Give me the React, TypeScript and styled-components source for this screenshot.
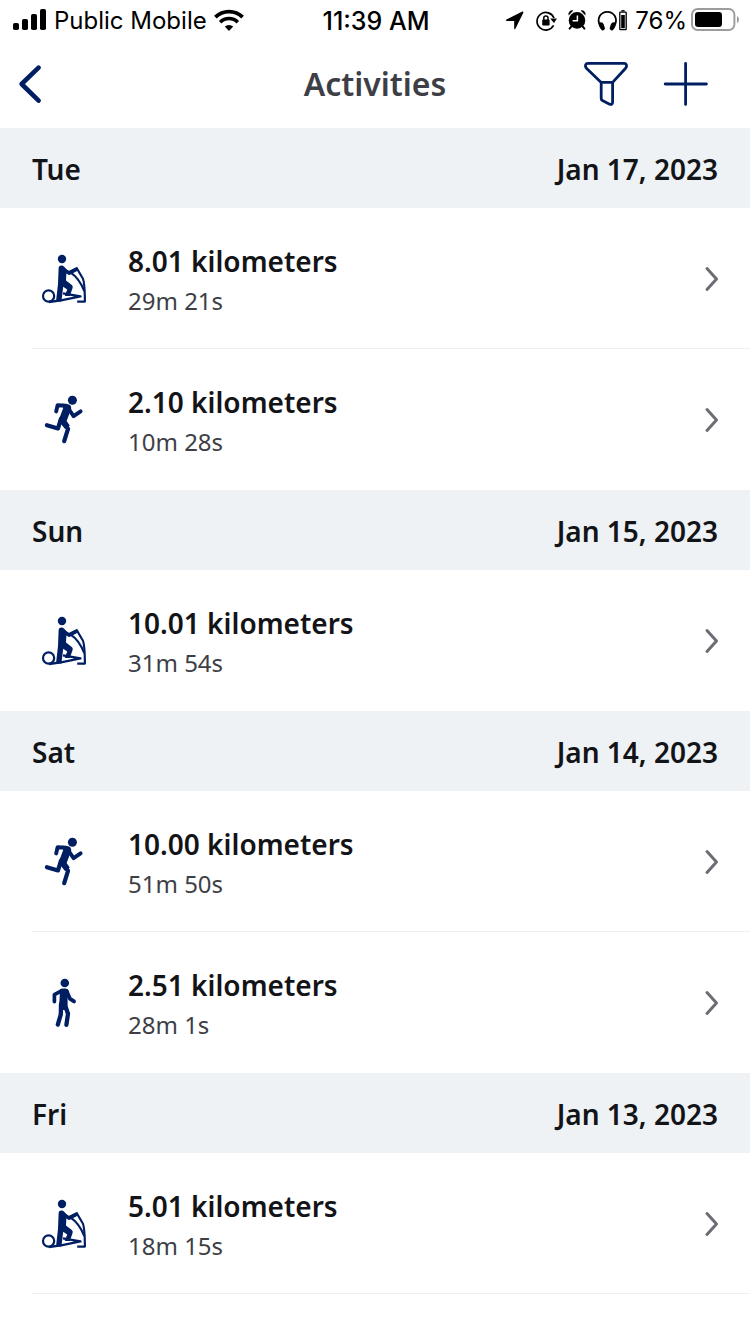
import React from "react";
import styled, { createGlobalStyle } from "styled-components";

const navy = "#001e62";

const GlobalStyle = createGlobalStyle`
  *, *::before, *::after { box-sizing: border-box; }
  body {
    margin: 0;
    background: #fff;
    color: #131417;
    font-family: "Noto Sans", "Open Sans", sans-serif;
  }
`;

const Screen = styled.div`
  width: 100%;
  padding-bottom: 40px;
`;

const StatusBar = styled.div`
  display: grid;
  grid-template-columns: 1fr auto 1fr;
  align-items: center;
  height: 40px;
  padding: 0 11px 0 13px;
  color: #000;
  font-family: Inter, "Liberation Sans", sans-serif;
  font-size: 24px;
  line-height: 32px;
  white-space: nowrap;
`;

const StatusGroup = styled.div<{ $end?: boolean }>`
  display: flex;
  align-items: center;
  justify-content: ${(p) => (p.$end ? "flex-end" : "flex-start")};
  gap: 7px;
`;

const StatusText = styled.span`
  padding-top: 2px;
`;

const Clock = styled.time`
  padding-top: 2px;
  font-size: 25px;
  font-weight: 500;
`;

const BatteryStatus = styled.div`
  display: flex;
  align-items: center;
  gap: 4px;
`;

const NavBar = styled.header`
  display: grid;
  grid-template-columns: 1fr auto 1fr;
  align-items: center;
  height: 88px;
  padding: 0 16px;
`;

const Title = styled.h1`
  margin: 0;
  color: #3e3f46;
  font-size: 32px;
  line-height: 44px;
  font-weight: 600;
`;

const Actions = styled.div`
  display: flex;
  justify-content: flex-end;
  gap: 32px;
  padding-right: 24px;
`;

const IconButton = styled.button`
  display: block;
  justify-self: start;
  padding: 0;
  border: 0;
  background: none;
  cursor: pointer;

  svg { display: block; }
`;

const DayHeader = styled.div`
  display: flex;
  align-items: center;
  justify-content: space-between;
  height: 80px;
  padding: 2px 32px 0;
  background: #eef2f5;
`;

const DayLabel = styled.h2`
  margin: 0;
  font-size: 28px;
  line-height: 40px;
  font-weight: 600;
`;

const DayDate = styled.time`
  font-size: 28px;
  line-height: 40px;
  font-weight: 600;
`;

const List = styled.ul`
  margin: 0;
  padding: 0 0 0 32px;
  list-style: none;
`;

const Item = styled.li<{ $divided: boolean }>`
  border-bottom: 1px solid ${(p) => (p.$divided ? "#eeeff1" : "transparent")};
`;

const ActivityLink = styled.a`
  display: flex;
  align-items: center;
  gap: 32px;
  height: 140px;
  padding-right: 30px;
  color: inherit;
  text-decoration: none;

  svg { flex: none; display: block; }
`;

const Details = styled.div`
  flex: 1;
  min-width: 0;
  padding-top: 6px;
`;

const Distance = styled.div`
  font-size: 28px;
  line-height: 40px;
  font-weight: 600;
`;

const Duration = styled.div`
  color: #3e3f46;
  font-size: 24px;
  line-height: 40px;
`;

type Kind = "elliptical" | "run" | "walk";

const EllipticalIcon = () => (
  <svg width="64" height="64" viewBox="2 1 64 64" fill="none" stroke={navy} aria-label="Elliptical" role="img">
    <circle cx="32" cy="14" r="4.2" fill={navy} stroke="none" />
    <circle cx="18.6" cy="51" r="5.6" strokeWidth="2.2" />
    <path d="M31.6 23.4 39 28 45.4 24.8" strokeWidth="3.8" strokeLinecap="round" strokeLinejoin="round" />
    <path d="M28.6 23.6q0-3 2.8-3 1.6 0 2.8 1.2l2.4 2.8-.6 11 5.8 4.4q1.4 1.2.8 3L39.8 51H34.8l2.4-6.6-4-2.6L31.4 56.4H26L28 39Z" fill={navy} stroke="none" />
    <path d="M19 57 31 55.4 50.5 51.4 33 48.4" strokeWidth="2.3" strokeLinejoin="round" />
    <path d="M46.2 22.2 51.8 31.8Q54.8 34 54.9 56.6H47.2" strokeWidth="2.2" strokeLinejoin="round" />
    <path d="M41 27.8Q49 33 54.3 46" strokeWidth="2.2" />
  </svg>
);

const RunIcon = () => (
  <svg width="64" height="64" viewBox="2 2 64 64" fill="none" stroke={navy} strokeLinecap="round" strokeLinejoin="round" aria-label="Run" role="img">
    <circle cx="42.4" cy="15.3" r="4.5" fill={navy} stroke="none" />
    <path d="M26.2 26.4 27.6 20.2 36 20.8" strokeWidth="3.9" />
    <path d="M38 23 43.6 31.2 50.6 26.4" strokeWidth="3.9" />
    <path d="M32 18.8 38 19.2Q41.6 20 41.2 24L36.6 36 39.8 40.6 35 44 31.4 39.4 28.2 36.6 33.2 23Z" fill={navy} stroke="none" />
    <path d="M31 33.6 28 43.4 16.9 40.2" strokeWidth="4.2" />
    <path d="M33 35.4 38 43.8 34.2 56.2" strokeWidth="4.2" />
  </svg>
);

const WalkIcon = () => (
  <svg width="64" height="64" viewBox="2 0 64 64" fill="none" stroke={navy} strokeLinecap="round" strokeLinejoin="round" aria-label="Walk" role="img">
    <circle cx="34.8" cy="13" r="4.3" fill={navy} stroke="none" />
    <path d="M24.4 31.6V24.6L31.4 20.8" strokeWidth="3.7" />
    <path d="M37 22 39.8 28.6 44 31.4" strokeWidth="3.9" />
    <path d="M30 19.4Q31 18.6 33 18.6H35.6Q38.4 18.8 39 21.6L37.6 27V35L36 40H29Z" fill={navy} stroke="none" />
    <path d="M31 34 30.8 44.4 27.8 54.6" strokeWidth="4.3" />
    <path d="M35 35 38 43.8 36.4 54.8" strokeWidth="4.3" />
  </svg>
);

const activityIcons: Record<Kind, () => React.JSX.Element> = {
  elliptical: EllipticalIcon,
  run: RunIcon,
  walk: WalkIcon,
};

const Chevron = () => (
  <svg width="16" height="28" viewBox="0 0 16 28" fill="none" stroke="#6c6d74" strokeWidth="3" strokeLinecap="round" strokeLinejoin="round" aria-hidden="true">
    <path d="M3 4.5 12.5 15 3 25.5" />
  </svg>
);

const SignalIcon = () => (
  <svg width="34" height="22" viewBox="0 0 34 22" aria-label="Signal strength" role="img">
    <rect x="0" y="14" width="6" height="7" rx="1.8" />
    <rect x="9" y="10" width="6" height="11" rx="1.8" />
    <rect x="18" y="5" width="6" height="16" rx="1.8" />
    <rect x="27" y="0" width="6" height="21" rx="1.8" />
  </svg>
);

const WifiIcon = () => (
  <svg width="30" height="22" viewBox="0 0 30 22" fill="none" stroke="#000" aria-label="Wi-Fi" role="img">
    <path d="M1.4 8.2a19.2 19.2 0 0 1 27.2 0" strokeWidth="3.8" />
    <path d="M6.2 13.2a12.4 12.4 0 0 1 17.6 0" strokeWidth="3.6" />
    <path d="M15 22 10.8 17.6a6 6 0 0 1 8.4 0Z" fill="#000" stroke="none" />
  </svg>
);

const IndicatorIcons = () => (
  <svg width="124" height="24" viewBox="505 8 124 24" fill="none" stroke="#000" aria-label="Location, rotation lock, alarm, headphones" role="img">
    <path d="M524 11.6Q524.6 12 524.2 13L516.4 28.8Q515.6 30 515.2 28.4V21H507.8Q506 20.6 507.4 19.6L522.8 11.8Q523.6 11.4 524 11.6Z" fill="#000" stroke="none" />
    <path d="M554.6 25.4A8.8 8.8 0 1 1 555 18" strokeWidth="1.7" />
    <path d="M551.2 18.6H558L555 23Z" fill="#000" stroke="none" />
    <rect x="543.2" y="19.4" width="7.4" height="6" rx="1" fill="#000" stroke="none" />
    <path d="M544.8 20v-2a2.1 2.1 0 0 1 4.2 0v2" strokeWidth="1.5" />
    <circle cx="578" cy="20.4" r="8.3" fill="#000" stroke="none" />
    <path d="M569.6 15.4a3.8 3.8 0 0 1 4.8-4.8ZM586.4 15.4a3.8 3.8 0 0 0-4.8-4.8Z" fill="#000" stroke="none" />
    <path d="M572.4 26.4 570.6 28.6M583.6 26.4 585.4 28.6" strokeWidth="2" strokeLinecap="round" />
    <path d="M578.4 15.6V20.8H573.6" stroke="#fff" strokeWidth="1.5" />
    <path d="M601.4 26.4C596.8 18.2 602 11.8 608.3 11.8S619.8 18.2 615.2 26.4" strokeWidth="1.8" />
    <path d="M600.4 22.4Q603.8 21.6 604.8 24.4L606 28.6Q605.4 31 602.8 30.2 599.4 27 600.4 22.4ZM616.2 22.4Q612.8 21.6 611.8 24.4L610.6 28.6Q611.2 31 613.8 30.2 617.2 27 616.2 22.4Z" fill="#000" stroke="none" />
    <rect x="620.8" y="12.2" width="6.4" height="17.4" rx="0.6" strokeWidth="1.3" />
    <rect x="622.2" y="15" width="3.6" height="13.2" fill="#000" stroke="none" />
    <path d="M622.4 10.8H625.6" strokeWidth="1.4" />
  </svg>
);

const BatteryIcon = () => (
  <svg width="48" height="24" viewBox="0 0 48 24" fill="none" aria-label="Battery" role="img">
    <rect x="1" y="1" width="42.4" height="21" rx="5.6" stroke="#9c9c9c" strokeWidth="1.9" />
    <rect x="4" y="4" width="27" height="15" rx="3.2" fill="#000" />
    <path d="M46 8q2 1 2 3.6T46 15Z" fill="#9c9c9c" />
  </svg>
);

const BackIcon = () => (
  <svg width="32" height="44" viewBox="0 0 32 44" fill="none" stroke={navy} strokeWidth="4.6" strokeLinecap="round" strokeLinejoin="round" aria-hidden="true">
    <path d="M22.6 5.6 5.6 22 22.6 38.6" />
  </svg>
);

const FilterIcon = () => (
  <svg width="48" height="48" viewBox="582 60 48 48" fill="none" stroke={navy} strokeWidth="2.8" strokeLinecap="round" strokeLinejoin="round" aria-hidden="true">
    <path d="M601.2 82.4 586.4 68.2Q585 66.4 585.6 64.8 586.2 63.4 587.8 63.4H624.2Q625.8 63.4 626.4 64.8 627 66.4 625.6 68.2L612.6 82.4ZM601.2 82.4V98.4Q601.2 99.8 602.4 100.6L609.6 104.2Q612.6 105 612.6 102V82.4" />
  </svg>
);

const AddIcon = () => (
  <svg width="48" height="48" viewBox="662 60 48 48" fill="none" stroke={navy} strokeWidth="2.8" strokeLinecap="round" aria-hidden="true">
    <path d="M685.6 63.4V104.4M665.2 84H706.4" />
  </svg>
);

interface Activity {
  kind: Kind;
  distance: string;
  duration: string;
  divided?: boolean;
}

interface Day {
  label: string;
  date: string;
  iso: string;
  activities: Activity[];
}

const days: Day[] = [
  {
    label: "Tue",
    date: "Jan 17, 2023",
    iso: "2023-01-17",
    activities: [
      { kind: "elliptical", distance: "8.01 kilometers", duration: "29m 21s", divided: true },
      { kind: "run", distance: "2.10 kilometers", duration: "10m 28s" },
    ],
  },
  {
    label: "Sun",
    date: "Jan 15, 2023",
    iso: "2023-01-15",
    activities: [{ kind: "elliptical", distance: "10.01 kilometers", duration: "31m 54s" }],
  },
  {
    label: "Sat",
    date: "Jan 14, 2023",
    iso: "2023-01-14",
    activities: [
      { kind: "run", distance: "10.00 kilometers", duration: "51m 50s", divided: true },
      { kind: "walk", distance: "2.51 kilometers", duration: "28m 1s" },
    ],
  },
  {
    label: "Fri",
    date: "Jan 13, 2023",
    iso: "2023-01-13",
    activities: [{ kind: "elliptical", distance: "5.01 kilometers", duration: "18m 15s", divided: true }],
  },
];

export default function App() {
  return (
    <Screen>
      <GlobalStyle />
      <StatusBar>
        <StatusGroup>
          <SignalIcon />
          <StatusText>Public Mobile</StatusText>
          <WifiIcon />
        </StatusGroup>
        <Clock>11:39 AM</Clock>
        <StatusGroup $end>
          <IndicatorIcons />
          <BatteryStatus>
            <StatusText>76%</StatusText>
            <BatteryIcon />
          </BatteryStatus>
        </StatusGroup>
      </StatusBar>
      <NavBar>
        <IconButton type="button" aria-label="Back">
          <BackIcon />
        </IconButton>
        <Title>Activities</Title>
        <Actions>
          <IconButton type="button" aria-label="Filter">
            <FilterIcon />
          </IconButton>
          <IconButton type="button" aria-label="Add activity">
            <AddIcon />
          </IconButton>
        </Actions>
      </NavBar>
      <main>
        {days.map((day) => (
          <section key={day.iso}>
            <DayHeader>
              <DayLabel>{day.label}</DayLabel>
              <DayDate dateTime={day.iso}>{day.date}</DayDate>
            </DayHeader>
            <List>
              {day.activities.map((activity) => {
                const Icon = activityIcons[activity.kind];
                return (
                  <Item key={activity.distance} $divided={Boolean(activity.divided)}>
                    <ActivityLink href="#">
                      <Icon />
                      <Details>
                        <Distance>{activity.distance}</Distance>
                        <Duration>{activity.duration}</Duration>
                      </Details>
                      <Chevron />
                    </ActivityLink>
                  </Item>
                );
              })}
            </List>
          </section>
        ))}
      </main>
    </Screen>
  );
}
